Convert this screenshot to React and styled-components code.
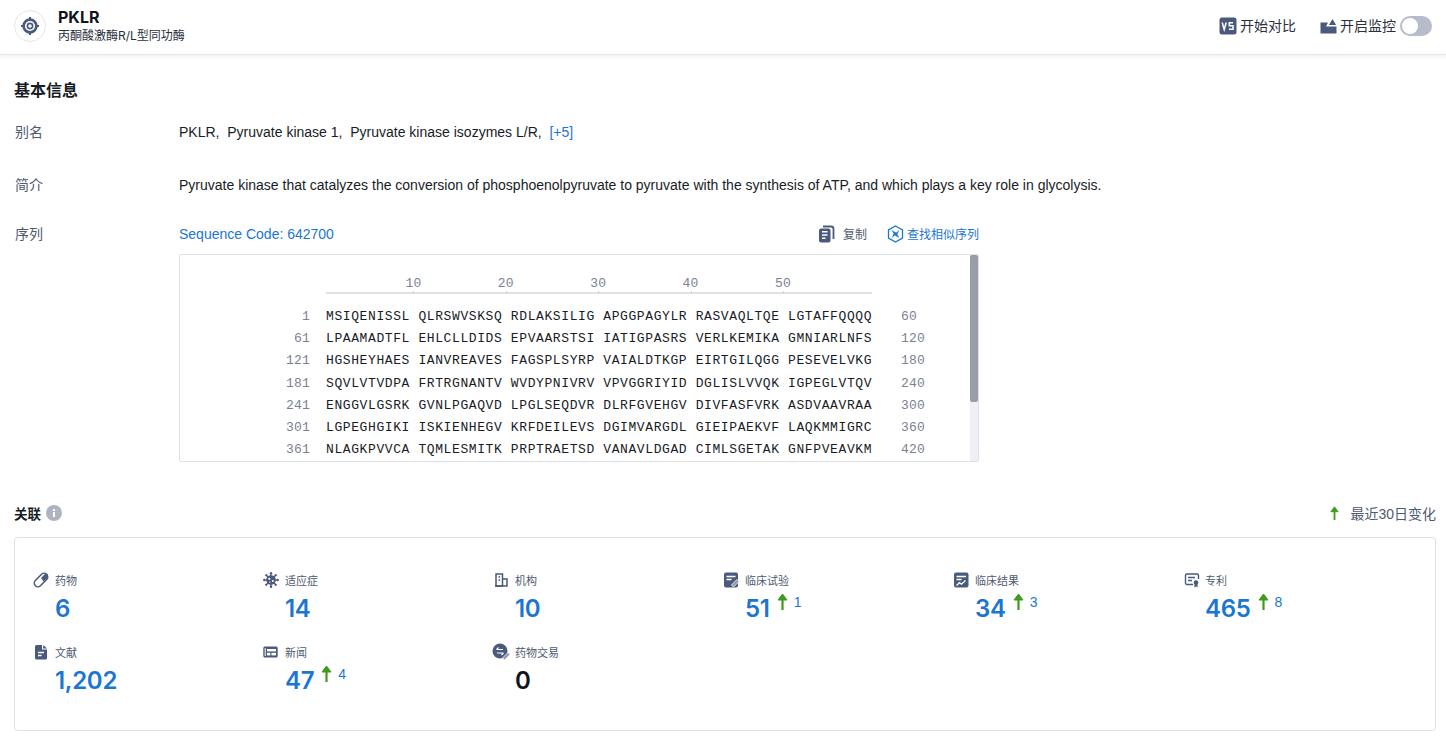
import React from "react";
import styled, { createGlobalStyle } from "styled-components";

const FONT = `Inter, "Noto Sans CJK SC", sans-serif`;
const TEXT_FONT = `"Liberation Sans", "Noto Sans CJK SC", sans-serif`;

const GlobalStyle = createGlobalStyle`
  html, body {
    margin: 0;
    padding: 0;
    height: 100%;
    overflow: hidden;
    background: #fff;
    font-family: ${FONT};
    color: #181c26;
  }
  * {
    box-sizing: border-box;
  }
`;

const Page = styled.div`
  display: flex;
  flex-direction: column;
  width: 1446px;
  height: 736px;
`;

const Header = styled.header`
  display: flex;
  align-items: center;
  justify-content: space-between;
  height: 55px;
  flex: none;
  padding: 0 14px 2px;
  border-bottom: 1px solid #e3e4ea;
  box-shadow: 0 2px 4px rgba(30, 40, 70, 0.06);
`;

const Brand = styled.div`
  display: flex;
  align-items: center;
  gap: 12px;
`;

const LogoCircle = styled.div`
  display: flex;
  align-items: center;
  justify-content: center;
  width: 32px;
  height: 32px;
  border: 1px solid #e4e6ec;
  border-radius: 50%;
`;

const BrandText = styled.div`
  display: flex;
  flex-direction: column;
  gap: 2px;
`;

const BrandName = styled.div`
  font-size: 16px;
  line-height: 18px;
  font-weight: 700;
  color: #0f1420;
`;

const BrandSub = styled.div`
  font-size: 12px;
  line-height: 16px;
  color: #2a303c;
`;

const Actions = styled.div`
  display: flex;
  align-items: center;
  gap: 24px;
`;

const Action = styled.div`
  display: flex;
  align-items: center;
  gap: 3px;
  font-size: 14px;
  color: #2a303c;
`;

const ActionLabel = styled.span`
  padding-bottom: 2px;
`;

const Toggle = styled.div`
  display: flex;
  align-items: center;
  width: 32px;
  height: 20px;
  margin-left: 1px;
  padding: 2px;
  border-radius: 10px;
  background: #b6bcca;
`;

const Knob = styled.div`
  width: 16px;
  height: 16px;
  border-radius: 50%;
  background: #fff;
`;

const Main = styled.main`
  display: flex;
  flex-direction: column;
  padding: 0 10px 0 14px;
`;

const SectionTitle = styled.h2`
  margin: 24px 0 0;
  font-size: 16px;
  line-height: 22px;
  font-weight: 600;
  color: #181c26;
`;

const InfoRow = styled.div`
  display: grid;
  grid-template-columns: 165px 1fr;
  margin-top: ${(p) => p.$top}px;
  font-size: 14px;
  line-height: 20px;
`;

const InfoLabel = styled.div`
  padding-left: 1px;
  color: #4e5a70;
`;

const InfoValue = styled.div`
  color: #181c26;
  font-family: ${TEXT_FONT};
`;

const Aliases = styled.div`
  display: flex;
  gap: 7.8px;
`;

const BlueText = styled.span`
  color: #1b76d2;
`;

const SeqBar = styled.div`
  display: flex;
  align-items: center;
  width: 800px;
  height: 20px;
`;

const SeqCode = styled.div`
  flex: 1;
  color: #1b76d2;
  font-family: ${TEXT_FONT};
`;

const SeqTool = styled.div`
  display: flex;
  align-items: center;
  gap: ${(p) => p.$gap}px;
  margin-left: ${(p) => p.$left || 0}px;
  font-family: ${FONT};
  font-size: 12px;
  color: ${(p) => p.$color || "#4e5a70"};
`;

const SeqToolLabel = styled.span`
  padding-top: 2px;
  line-height: 18px;
`;

const SeqFrame = styled.div`
  position: relative;
  width: 800px;
  height: 208px;
  margin: 10px 0 0 165px;
  border: 1px solid #e0e1e8;
  border-radius: 2px;
`;

const SeqScroll = styled.div`
  height: 100%;
  overflow-y: auto;
`;

const ScrollTrack = styled.div`
  position: absolute;
  top: 0;
  right: 0;
  bottom: 0;
  width: 8px;
  background: #efeff5;
`;

const ScrollThumb = styled.div`
  height: 147px;
  border-radius: 2px;
  background: #9a9ca8;
`;

const SeqInner = styled.div`
  padding: 21px 0 14px;
`;

const RulerWrap = styled.div`
  display: flex;
  width: 546px;
  margin: 0 0 12px 146px;
  padding-left: 3px;
  border-bottom: 2px solid #e0e1e8;
`;

const RulerMark = styled.div`
  position: relative;
  width: 92.4px;
  text-align: right;
  font-family: "Liberation Mono", monospace;
  font-size: 13px;
  letter-spacing: 0.2px;
  line-height: 16px;
  color: #7b8294;
  &::after {
    content: "";
    position: absolute;
    right: 7px;
    bottom: -2px;
    width: 1px;
    height: 3px;
    background: #d0d2da;
  }
`;

const SeqRow = styled.div`
  display: grid;
  grid-template-columns: 130px 546px 1fr;
  column-gap: 16px;
  height: 22.2px;
  line-height: 22.2px;
`;

const RowNum = styled.div`
  font-family: "Liberation Mono", monospace;
  font-size: 13px;
  letter-spacing: 0.2px;
  color: #7b8294;
  text-align: ${(p) => p.$align};
  padding-left: ${(p) => (p.$align === "left" ? 13 : 0)}px;
`;

const Residues = styled.div`
  font-family: "Liberation Mono", monospace;
  font-size: 13px;
  letter-spacing: 0.6px;
  white-space: pre;
  color: #181c26;
`;

const RelatedBar = styled.div`
  display: flex;
  align-items: center;
  justify-content: space-between;
  margin-top: 41px;
  height: 20px;
`;

const RelatedTitle = styled.div`
  display: flex;
  align-items: center;
  gap: 5px;
  font-size: 13.5px;
  font-weight: 600;
  color: #181c26;
`;

const Legend = styled.div`
  display: flex;
  align-items: center;
  gap: 10px;
  font-family: ${TEXT_FONT};
  font-size: 14px;
  color: #4e5a70;
`;

const StatsCard = styled.section`
  display: grid;
  grid-template-columns: repeat(6, 230px);
  grid-auto-rows: 72px;
  height: 194px;
  margin-top: 14px;
  padding: 33px 19px 0;
  border: 1px solid #e0e1e8;
  border-radius: 4px;
`;

const Stat = styled.div`
  display: flex;
  flex-direction: column;
`;

const StatLabel = styled.div`
  display: flex;
  align-items: center;
  gap: 5px;
  height: 18px;
  font-size: 11px;
  color: #4e5a70;
`;

const StatIcon = styled.svg`
  width: 16px;
  height: 16px;
  flex: none;
  overflow: visible;
`;

const StatBody = styled.div`
  display: flex;
  align-items: flex-start;
  margin: 3px 0 0 21px;
`;

const StatValue = styled.div`
  font-size: 24px;
  line-height: 34px;
  font-weight: 600;
  letter-spacing: -0.3px;
  color: ${(p) => (p.$zero ? "#0f1420" : "#1b76d2")};
`;

const Delta = styled.div`
  display: flex;
  align-items: flex-start;
  gap: 6px;
  margin: 1px 0 0 7px;
  font-family: ${TEXT_FONT};
  font-size: 14px;
  line-height: 17px;
  color: #1b76d2;
`;

const DeltaCount = styled.span`
  margin-top: 1px;
`;

const INK = "#4a5a7c";

const UpArrow = ({ h = 17 }) => (
  <svg width="11" height={h} viewBox="0 0 11 17" fill="none" stroke="#3f9a1d" strokeWidth="2.2">
    <path d="M5.5 17V4" />
    <path d="M5.5 1 1 7h9z" fill="#3f9a1d" strokeWidth="1" />
  </svg>
);

const Crosshair = () => (
  <svg width="20" height="20" viewBox="0 0 20 20" fill="none" stroke={INK} strokeWidth="2.6">
    <circle cx="10" cy="10" r="6.4" />
    <circle cx="10" cy="10" r="2.6" strokeWidth="1.7" />
    <path d="M10 1v3.5M10 15.5V19M1 10h3.5M15.5 10H19" strokeWidth="2" />
  </svg>
);

const CompareIcon = () => (
  <svg width="18" height="18" viewBox="0 0 18 18">
    <rect x="0.5" y="0.5" width="17" height="17" rx="2.5" fill={INK} />
    <path d="M3.2 5.5 5.2 12.5 7.2 5.5" fill="none" stroke="#fff" strokeWidth="1.5" />
    <path d="M14 5.8H10.3V8.8H14V12.3H10" fill="none" stroke="#fff" strokeWidth="1.5" />
  </svg>
);

const MonitorIcon = () => (
  <svg width="17" height="16" viewBox="0 0 17 16">
    <path d="M0.5 4.5H8L6 8.5h10.5V15.5H0.5z" fill={INK} />
    <path d="M12.5 1l3.6 6H8.9z" fill={INK} />
  </svg>
);

const CopyIcon = () => (
  <svg width="16" height="18" viewBox="0 0 16 18">
    <rect x="0" y="3.5" width="11.5" height="14" rx="2" fill={INK} />
    <path d="M3 6.8h5.5M3 10h5.5M3 13.2h3.5" stroke="#fff" strokeWidth="1.5" />
    <path d="M4 1.5 h8 a2.5 2.5 0 0 1 2.5 2.5v10" fill="none" stroke={INK} strokeWidth="1.8" />
  </svg>
);

const SimilarIcon = () => (
  <svg width="17" height="18" viewBox="0 0 17 18" fill="none" stroke="#1b76d2">
    <path d="M8.5 1 15.5 5v8l-7 4-7-4V5z" strokeWidth="1.3" />
    <path d="M5 5.5 9.2 7.8 12 5.5 10.2 9.2 12 12.5 7.8 10.2 5 12.5 6.8 8.8z" fill="#1b76d2" strokeWidth="0.3" />
  </svg>
);

const InfoDot = () => (
  <svg width="16" height="16" viewBox="0 0 16 16">
    <circle cx="8" cy="8" r="8" fill="#aeb4c2" />
    <rect x="7" y="7" width="2" height="5" fill="#fff" />
    <rect x="7" y="4" width="2" height="2" fill="#fff" />
  </svg>
);

const virusKnobs = [0, 45, 90, 135, 180, 225, 270, 315];

const icons = {
  pill: (
    <g>
      <rect x="-8" y="-3.6" width="16" height="7.2" rx="3.6" transform="translate(7 8) rotate(-45)" fill="none" stroke={INK} strokeWidth="1.5" />
      <path d="M7 6 11.4 1.6 14 2.4 14 5.5 9.5 9.5z" fill={INK} />
    </g>
  ),
  virus: (
    <g transform="translate(-1 0)">
      <circle cx="8" cy="8" r="4.8" fill={INK} />
      {virusKnobs.map((a) => (
        <g key={a} transform={`rotate(${a} 8 8)`}>
          <rect x="7.4" y="1.5" width="1.2" height="3" fill={INK} />
          <circle cx="8" cy="1.3" r="1.2" fill={INK} />
        </g>
      ))}
      <circle cx="6.3" cy="6.8" r="1.1" fill="#fff" />
      <circle cx="9.8" cy="9" r="1" fill="#fff" />
      <circle cx="6.8" cy="10.2" r="0.6" fill="#fff" />
    </g>
  ),
  org: (
    <g fill="none" stroke={INK} strokeWidth="1.5">
      <path d="M2 14V2h6.5v12z" />
      <path d="M8.5 7h4.5v7H1" />
      <path d="M4.5 5h1.6M4.5 8h1.6" />
    </g>
  ),
  trial: (
    <g>
      <rect x="0" y="0.5" width="14" height="15" rx="2" fill={INK} />
      <path d="M2.5 4.5h9M2.5 7.5h5" stroke="#fff" strokeWidth="1.4" />
      <path d="M7.5 13 13 7.5l2 2L9.5 15z" fill="#8c97ad" stroke="#fff" strokeWidth="0.8" />
    </g>
  ),
  result: (
    <g>
      <rect x="0" y="0.5" width="14.5" height="15" rx="2" fill={INK} />
      <path d="M2.5 4.5h9.5M2.5 7.5h5" stroke="#fff" strokeWidth="1.4" />
      <path d="M2.5 13.5l3-2.8 2 1.5 4-3.7" fill="none" stroke="#fff" strokeWidth="1.3" />
    </g>
  ),
  patent: (
    <g>
      <path d="M9 12.5H3a1.5 1.5 0 0 1-1.5-1.5V3.5A1.5 1.5 0 0 1 3 2h10a1.5 1.5 0 0 1 1.5 1.5V7" fill="none" stroke={INK} strokeWidth="1.4" />
      <path d="M4 5.5h7M4 8.5h4" stroke={INK} strokeWidth="1.3" />
      <circle cx="12" cy="10.5" r="2.3" fill={INK} />
      <path d="M10.5 12v3.5l1.5-1 1.5 1V12z" fill={INK} />
    </g>
  ),
  doc: (
    <g>
      <path d="M1 2.5A1.5 1.5 0 0 1 2.5 1H8v4.5h5V14a1.5 1.5 0 0 1-1.5 1.5h-9A1.5 1.5 0 0 1 1 14z" fill={INK} />
      <path d="M9.2 1 13 4.4H9.2z" fill={INK} />
      <path d="M4 8.5h6M4 11.5h3.5" stroke="#fff" strokeWidth="1.4" />
    </g>
  ),
  news: (
    <g transform="translate(-1.5 0)">
      <rect x="0.8" y="2.5" width="14.4" height="11" rx="1.5" fill={INK} />
      <rect x="4.5" y="5" width="9" height="2.4" fill="#fff" />
      <rect x="4.5" y="8.8" width="3.4" height="2.6" fill="#fff" />
      <rect x="9" y="8.8" width="4.5" height="2.6" fill="#fff" />
      <rect x="2.2" y="4" width="1" height="8" fill="#fff" />
    </g>
  ),
  deal: (
    <g>
      <circle cx="6" cy="7" r="7.5" fill={INK} />
      <path d="M2.5 5.5h6.5M4.5 3.5l-2 2M3 9h6.5M7.5 11l2-2" stroke="#fff" strokeWidth="1.2" fill="none" />
      <path d="M8.5 14 14 8.5l2 2-5.5 5.5z" fill="#8c97ad" stroke="#fff" strokeWidth="0.8" />
    </g>
  ),
};

const sequence = [
  ["1", "MSIQENISSL QLRSWVSKSQ RDLAKSILIG APGGPAGYLR RASVAQLTQE LGTAFFQQQQ", "60"],
  ["61", "LPAAMADTFL EHLCLLDIDS EPVAARSTSI IATIGPASRS VERLKEMIKA GMNIARLNFS", "120"],
  ["121", "HGSHEYHAES IANVREAVES FAGSPLSYRP VAIALDTKGP EIRTGILQGG PESEVELVKG", "180"],
  ["181", "SQVLVTVDPA FRTRGNANTV WVDYPNIVRV VPVGGRIYID DGLISLVVQK IGPEGLVTQV", "240"],
  ["241", "ENGGVLGSRK GVNLPGAQVD LPGLSEQDVR DLRFGVEHGV DIVFASFVRK ASDVAAVRAA", "300"],
  ["301", "LGPEGHGIKI ISKIENHEGV KRFDEILEVS DGIMVARGDL GIEIPAEKVF LAQKMMIGRC", "360"],
  ["361", "NLAGKPVVCA TQMLESMITK PRPTRAETSD VANAVLDGAD CIMLSGETAK GNFPVEAVKM", "420"],
  ["421", "QHAIAREAEA AVYHRQLFEE LRRAAPLSRD PTEVTAIGAV EAAFKCCAAA IIVLTTTGRS", "480"],
  ["481", "AQLLSRYRPR AAVIAVTRSA QAARQVHLCR GVFPLLYREP PEAIWADDVD RRVQFGIESG", "540"],
  ["541", "KLRGFLRVGD LVIVVTGWRP GSGYTNIMRV LSIS", "574"],
];

const stats = [
  { icon: "pill", label: "药物", value: "6" },
  { icon: "virus", label: "适应症", value: "14" },
  { icon: "org", label: "机构", value: "10" },
  { icon: "trial", label: "临床试验", value: "51", delta: "1" },
  { icon: "result", label: "临床结果", value: "34", delta: "3" },
  { icon: "patent", label: "专利", value: "465", delta: "8" },
  { icon: "doc", label: "文献", value: "1,202" },
  { icon: "news", label: "新闻", value: "47", delta: "4" },
  { icon: "deal", label: "药物交易", value: "0" },
];

export default function App() {
  return (
    <Page>
      <GlobalStyle />
      <Header>
        <Brand>
          <LogoCircle>
            <Crosshair />
          </LogoCircle>
          <BrandText>
            <BrandName>PKLR</BrandName>
            <BrandSub>丙酮酸激酶R/L型同功酶</BrandSub>
          </BrandText>
        </Brand>
        <Actions>
          <Action>
            <CompareIcon />
            <ActionLabel>开始对比</ActionLabel>
          </Action>
          <Action>
            <MonitorIcon />
            <ActionLabel>开启监控</ActionLabel>
            <Toggle>
              <Knob />
            </Toggle>
          </Action>
        </Actions>
      </Header>
      <Main>
        <SectionTitle>基本信息</SectionTitle>
        <InfoRow $top={21}>
          <InfoLabel>别名</InfoLabel>
          <InfoValue>
            <Aliases>
              <span>PKLR,</span>
              <span>Pyruvate kinase 1,</span>
              <span>Pyruvate kinase isozymes L/R,</span>
              <BlueText>[+5]</BlueText>
            </Aliases>
          </InfoValue>
        </InfoRow>
        <InfoRow $top={33}>
          <InfoLabel>简介</InfoLabel>
          <InfoValue>
            Pyruvate kinase that catalyzes the conversion of phosphoenolpyruvate to pyruvate with the synthesis of ATP, and which plays a key role in glycolysis.
          </InfoValue>
        </InfoRow>
        <InfoRow $top={29}>
          <InfoLabel>序列</InfoLabel>
          <SeqBar>
            <SeqCode>Sequence Code: 642700</SeqCode>
            <SeqTool $gap={8}>
              <CopyIcon />
              <SeqToolLabel>复制</SeqToolLabel>
            </SeqTool>
            <SeqTool $gap={3} $left={20} $color="#1b76d2">
              <SimilarIcon />
              <SeqToolLabel>查找相似序列</SeqToolLabel>
            </SeqTool>
          </SeqBar>
        </InfoRow>
        <SeqFrame>
          <SeqScroll>
            <SeqInner>
              <RulerWrap>
                {[10, 20, 30, 40, 50].map((n) => (
                  <RulerMark key={n}>{n}</RulerMark>
                ))}
              </RulerWrap>
              {sequence.map(([start, residues, end]) => (
                <SeqRow key={start}>
                  <RowNum $align="right">{start}</RowNum>
                  <Residues>{residues}</Residues>
                  <RowNum $align="left">{end}</RowNum>
                </SeqRow>
              ))}
            </SeqInner>
          </SeqScroll>
          <ScrollTrack>
            <ScrollThumb />
          </ScrollTrack>
        </SeqFrame>
        <RelatedBar>
          <RelatedTitle>
            关联
            <InfoDot />
          </RelatedTitle>
          <Legend>
            <UpArrow h={14} />
            最近30日变化
          </Legend>
        </RelatedBar>
        <StatsCard>
          {stats.map((s) => (
            <Stat key={s.label}>
              <StatLabel>
                <StatIcon viewBox="0 0 16 16">{icons[s.icon]}</StatIcon>
                {s.label}
              </StatLabel>
              <StatBody>
                <StatValue $zero={s.value === "0"}>{s.value}</StatValue>
                {s.delta && (
                  <Delta>
                    <UpArrow />
                    <DeltaCount>{s.delta}</DeltaCount>
                  </Delta>
                )}
              </StatBody>
            </Stat>
          ))}
        </StatsCard>
      </Main>
    </Page>
  );
}
